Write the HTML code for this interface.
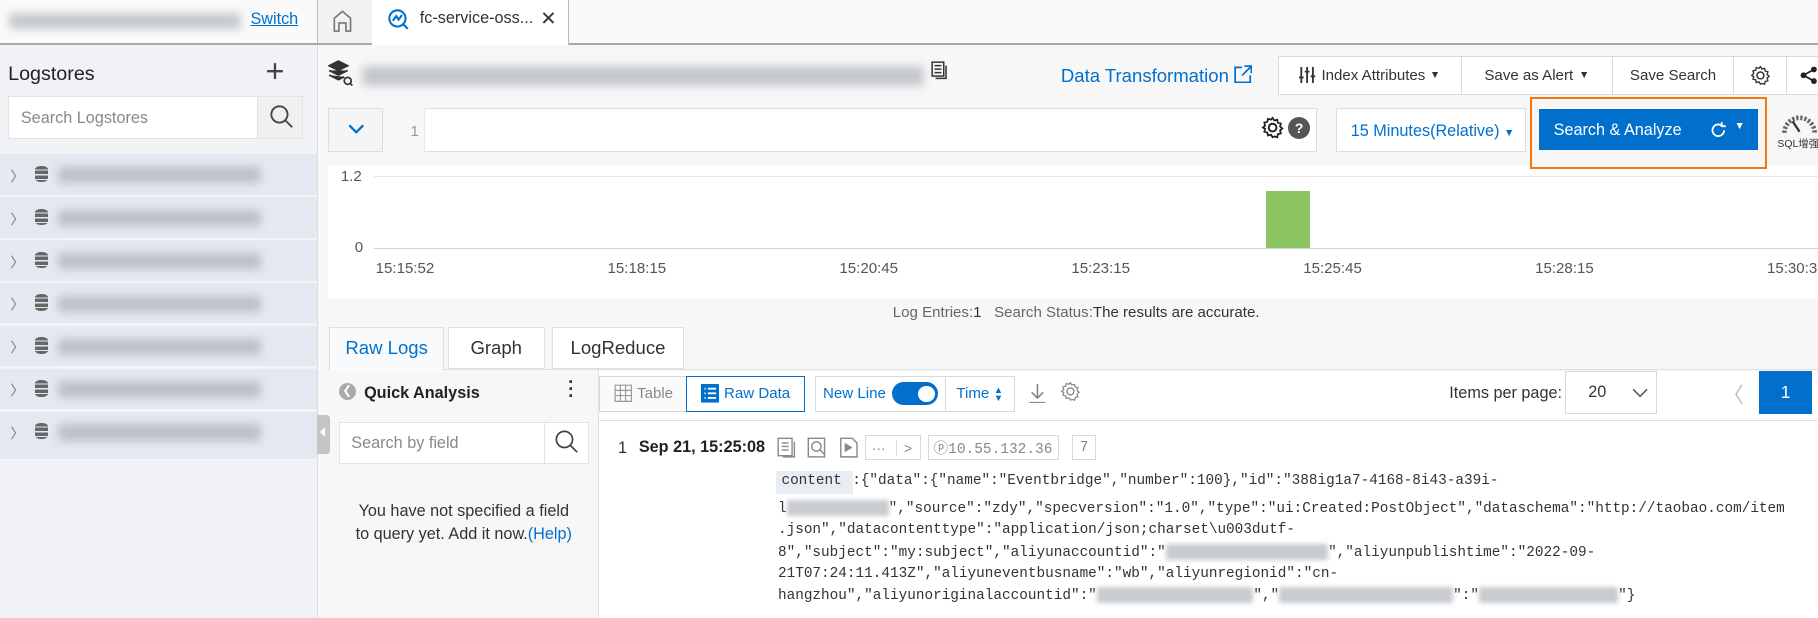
<!DOCTYPE html>
<html><head><meta charset="utf-8"><style>
html,body{margin:0;padding:0;overflow:hidden;background:#f7f7f7}
#r{position:relative;width:1568px;height:533px;zoom:1.15944;font-family:"Liberation Sans",sans-serif;font-size:13px;color:#333;background:#f7f7f8;overflow:hidden}
.a{position:absolute}
.blur{position:absolute;background:#9aa0a8;filter:blur(4px);opacity:.55;border-radius:3px}
.mono{font-family:"Liberation Mono",monospace;font-size:12.4px;color:#333;white-space:pre}
.btn{position:absolute;border:1px solid #d8d8d8;background:#fff;box-sizing:border-box;display:flex;align-items:center;justify-content:center;font-size:13px;color:#333}
.row{position:absolute;left:0;width:273px;height:35px;background:#e4e8f1;border-bottom:2px solid #f3f4f7}
.row .chev{position:absolute;left:9px;top:10px;font-size:12px;color:#777}
.db{position:absolute;left:30px;top:10px;width:11px;height:14px;background:repeating-linear-gradient(#666 0 3px,#e4e8f1 3px 4px);border-radius:5px/3px}
.xl{position:absolute;top:224px;font-size:13px;color:#555}
.blk{display:inline-block;background:#c8cbd0;filter:blur(2px);height:14px;vertical-align:middle}
</style></head><body><div id="r">
<div class="a" style="left:0;top:0;width:1568px;height:37px;background:#fafafa;border-bottom:2px solid #a8a8a8"></div>
<div class="blur" style="left:8px;top:11px;width:200px;height:14px"></div>
<div class="a" style="left:216px;top:9px;color:#0070cc;text-decoration:underline;font-size:14px">Switch</div>
<div class="a" style="left:273px;top:0;width:47px;height:37px;background:#f2f2f2;border-left:1px solid #bbb;border-right:1px solid #bbb"></div>
<svg class="a" style="left:286px;top:8px" width="18" height="20" viewBox="0 0 18 20"><path d="M2 19V8L9 2l7 6v11H12v-7H6v7z" fill="none" stroke="#777" stroke-width="1.4"/></svg>
<div class="a" style="left:321px;top:0;width:169px;height:39px;background:#fff;border-right:1px solid #bbb"></div>
<svg class="a" style="left:334px;top:7px" width="20" height="20" viewBox="0 0 20 20"><circle cx="9" cy="9" r="7" fill="none" stroke="#0070cc" stroke-width="1.8"/><path d="M5 11l3-4 2 3 3-4M14 14l4 4" fill="none" stroke="#0070cc" stroke-width="1.8"/></svg>
<div class="a" style="left:362px;top:8px;font-size:14px;color:#333">fc-service-oss...</div>
<div class="a" style="left:466px;top:6px;font-size:17px;color:#333">✕</div>
<div class="a" style="left:0;top:39px;width:273px;height:494px;background:#f1f2f6;border-right:1px solid #ddd"></div>
<div class="a" style="left:7px;top:54px;font-size:17px;color:#222">Logstores</div>
<div class="a" style="left:229px;top:46px;font-size:28px;font-weight:300;color:#444">+</div>
<div class="a" style="left:7px;top:83px;width:254px;height:37px;background:#fff;border:1px solid #e2e2e2;box-sizing:border-box"></div>
<div class="a" style="left:18px;top:94px;color:#888;font-size:14px">Search Logstores</div>
<div class="a" style="left:222px;top:83px;width:39px;height:37px;background:#f0f0f0;border:1px solid #e2e2e2;box-sizing:border-box"></div>
<svg class="a" style="left:232px;top:90px" width="22" height="22" viewBox="0 0 22 22"><circle cx="9" cy="9" r="7" fill="none" stroke="#444" stroke-width="1.6"/><path d="M14 14l6 6" stroke="#444" stroke-width="1.6"/></svg>
<div class="row" style="top:133px"><span class="chev">〉</span><span class="db"></span><div class="blur" style="left:50px;top:11px;width:175px;height:14px"></div></div>
<div class="row" style="top:170px"><span class="chev">〉</span><span class="db"></span><div class="blur" style="left:50px;top:11px;width:175px;height:14px"></div></div>
<div class="row" style="top:207px"><span class="chev">〉</span><span class="db"></span><div class="blur" style="left:50px;top:11px;width:175px;height:14px"></div></div>
<div class="row" style="top:244px"><span class="chev">〉</span><span class="db"></span><div class="blur" style="left:50px;top:11px;width:175px;height:14px"></div></div>
<div class="row" style="top:281px"><span class="chev">〉</span><span class="db"></span><div class="blur" style="left:50px;top:11px;width:175px;height:14px"></div></div>
<div class="row" style="top:318px"><span class="chev">〉</span><span class="db"></span><div class="blur" style="left:50px;top:11px;width:175px;height:14px"></div></div>
<div class="row" style="top:355px;height:41px"><span class="chev">〉</span><span class="db"></span><div class="blur" style="left:50px;top:11px;width:175px;height:14px"></div></div>
<div class="a" style="left:273px;top:358px;width:12px;height:34px;background:#c4c4c4;border-radius:0 3px 3px 0"></div>
<div class="a" style="left:276px;top:368px;width:0;height:0;border:5px solid transparent;border-right-color:#fff;border-left:0"></div>
<svg class="a" style="left:283px;top:52px" width="22" height="24" viewBox="0 0 22 24"><path d="M9 1l8 4-8 4-8-4zM1 9l8 4 8-4M1 13l8 4 5-2.5" fill="#333" stroke="#333" stroke-width="1.5"/><circle cx="17" cy="18" r="3" fill="none" stroke="#333" stroke-width="1.5"/><path d="M19 20l2 2" stroke="#333" stroke-width="1.5"/></svg>
<div class="blur" style="left:312px;top:57px;width:485px;height:17px"></div>
<svg class="a" style="left:803px;top:53px" width="14" height="16" viewBox="0 0 14 16"><rect x="1" y="1" width="10" height="12" fill="none" stroke="#333" stroke-width="1.3"/><path d="M3 4h6M3 7h6M3 10h6M13 4v11H4" fill="none" stroke="#333" stroke-width="1.3"/></svg>
<div class="a" style="left:915px;top:56px;font-size:16px;color:#0070cc">Data Transformation</div>
<svg class="a" style="left:1064px;top:56px" width="16" height="16" viewBox="0 0 16 16"><path d="M7 2H1v13h13V9M9 1h6v6M15 1L7 9" fill="none" stroke="#0070cc" stroke-width="1.5"/></svg>
<div class="btn" style="left:1102px;top:48px;width:159px;height:34px">
<svg width="14" height="14" viewBox="0 0 14 14" style="margin-right:5px"><path d="M2 0v14M7 0v14M12 0v14M0 9h4M5 4h4M10 8h4" stroke="#333" stroke-width="1.6"/></svg>Index Attributes <span style="font-size:9px;margin-left:4px">▼</span></div>
<div class="btn" style="left:1260px;top:48px;width:131px;height:34px">Save as Alert <span style="font-size:9px;margin-left:5px">▼</span></div>
<div class="btn" style="left:1390px;top:48px;width:106px;height:34px">Save Search</div>
<div class="btn" style="left:1495px;top:48px;width:46px;height:34px"><svg width="18" height="18" viewBox="0 0 18 18"><circle cx="9" cy="9" r="3" fill="none" stroke="#333" stroke-width="1.3"/><path d="M9 1.5l1.3 2 2.3-.6.5 2.3 2.3.6-.6 2.3 1.7 1.6-1.7 1.6.6 2.3-2.3.6-.5 2.3-2.3-.6L9 16.5l-1.3-2-2.3.6-.5-2.3-2.3-.6.6-2.3L1.5 9l1.7-1.6-.6-2.3 2.3-.6.5-2.3 2.3.6z" fill="none" stroke="#333" stroke-width="1.2"/></svg></div>
<div class="btn" style="left:1540px;top:48px;width:40px;height:34px;justify-content:flex-start;padding-left:12px">
<svg width="16" height="16" viewBox="0 0 16 16"><circle cx="12" cy="3" r="2.5" fill="#222"/><circle cx="3" cy="8" r="2.5" fill="#222"/><circle cx="12" cy="13" r="2.5" fill="#222"/><path d="M12 3L3 8l9 5" stroke="#222" stroke-width="1.5" fill="none"/></svg></div>
<div class="a" style="left:283px;top:93px;width:853px;height:38px;background:#fff;border:1px solid #ddd;box-sizing:border-box"></div>
<div class="a" style="left:283px;top:93px;width:47px;height:38px;background:#f5f5f5;border:1px solid #ddd;box-sizing:border-box"></div>
<svg class="a" style="left:299px;top:106px" width="16" height="10" viewBox="0 0 16 10"><path d="M2 2l6 6 6-6" fill="none" stroke="#0070cc" stroke-width="2"/></svg>
<div class="a" style="left:330px;top:93px;width:36px;height:38px;background:#f7f7f7;border-right:1px solid #e8e8e8"></div>
<div class="a" style="left:354px;top:106px;color:#999;font-size:13px">1</div>
<svg class="a" style="left:1088px;top:100px" width="20" height="20" viewBox="0 0 18 18"><circle cx="9" cy="9" r="3" fill="none" stroke="#222" stroke-width="1.5"/><path d="M9 1.5l1.3 2 2.3-.6.5 2.3 2.3.6-.6 2.3 1.7 1.6-1.7 1.6.6 2.3-2.3.6-.5 2.3-2.3-.6L9 16.5l-1.3-2-2.3.6-.5-2.3-2.3-.6.6-2.3L1.5 9l1.7-1.6-.6-2.3 2.3-.6.5-2.3 2.3.6z" fill="none" stroke="#222" stroke-width="1.4"/></svg>
<div class="a" style="left:1111px;top:101px;width:19px;height:19px;border-radius:50%;background:#555;color:#fff;font-size:12px;font-weight:bold;text-align:center;line-height:19px">?</div>
<div class="a" style="left:1152px;top:93px;width:164px;height:38px;background:#fff;border:1px solid #ddd;box-sizing:border-box"></div>
<div class="a" style="left:1165px;top:105px;color:#0070cc;font-size:14px">15 Minutes(Relative) <span style="font-size:9px">▼</span></div>
<div class="a" style="left:283px;top:142px;width:1285px;height:116px;background:#fff"></div>
<div class="a" style="left:1320px;top:84px;width:204px;height:62px;border:2px solid #f5770f;box-sizing:border-box;background:#f7f7f8"></div>
<div class="a" style="left:1327px;top:94px;width:189px;height:35px;background:#0070cc"></div>
<div class="a" style="left:1340px;top:104px;color:#fff;font-size:14px">Search &amp; Analyze</div>
<svg class="a" style="left:1474px;top:104px" width="16" height="16" viewBox="0 0 16 16"><path d="M13 8a5 5 0 1 1-2-4M11 1v3.5h3.5" fill="none" stroke="#fff" stroke-width="1.6"/></svg>
<div class="a" style="left:1496px;top:104px;color:#fff;font-size:9px">▼</div>
<svg class="a" style="left:1536px;top:97px" width="32" height="20" viewBox="0 0 32 20"><path d="M3 18A13 13 0 0 1 29 18" fill="none" stroke="#666" stroke-width="4" stroke-dasharray="2 1.5"/><path d="M10 8l6 9" stroke="#333" stroke-width="2"/></svg>
<div class="a" style="left:1533px;top:117px;font-size:9px;color:#333;white-space:nowrap">SQL增强</div>
<div class="a" style="left:323px;top:152px;width:1245px;height:1px;background:#e6e6e6"></div>
<div class="a" style="left:323px;top:214px;width:1245px;height:1px;background:#ccd3e3"></div>
<div class="a" style="left:294px;top:145px;font-size:13px;color:#555">1.2</div>
<div class="a" style="left:306px;top:206px;font-size:13px;color:#555">0</div>
<div class="a" style="left:1092px;top:165px;width:38px;height:49px;background:#8cc660"></div>
<div class="xl" style="left:324px">15:15:52</div>
<div class="xl" style="left:524px">15:18:15</div>
<div class="xl" style="left:724px">15:20:45</div>
<div class="xl" style="left:924px">15:23:15</div>
<div class="xl" style="left:1124px">15:25:45</div>
<div class="xl" style="left:1324px">15:28:15</div>
<div class="xl" style="left:1524px">15:30:30</div>
<div class="a" style="left:770px;top:262px;font-size:13px;color:#666">Log Entries:<span style="color:#333">1</span> &nbsp; Search Status:<span style="color:#333">The results are accurate.</span></div>
<div class="a" style="left:283px;top:318px;width:1285px;height:1px;background:#e0e0e0"></div>
<div class="a" style="left:284px;top:282px;width:99px;height:37px;background:#f9fafc;border:1px solid #e0e0e0;border-bottom:none;box-sizing:border-box;color:#0070cc;font-size:16px;text-align:center;line-height:34px">Raw Logs</div>
<div class="a" style="left:386px;top:282px;width:84px;height:36px;background:#fff;border:1px solid #e0e0e0;box-sizing:border-box;font-size:16px;text-align:center;line-height:34px">Graph</div>
<div class="a" style="left:476px;top:282px;width:114px;height:36px;background:#fff;border:1px solid #e0e0e0;box-sizing:border-box;font-size:16px;text-align:center;line-height:34px">LogReduce</div>
<div class="a" style="left:292px;top:330px;width:15px;height:15px;border-radius:50%;background:#aaa;color:#fff;font-size:10px;text-align:center;line-height:15px">❮</div>
<div class="a" style="left:314px;top:331px;font-size:14px;font-weight:bold;color:#222">Quick Analysis</div>
<div class="a" style="left:490px;top:327px;font-size:16px;font-weight:bold;color:#333;line-height:6px">·<br>·<br>·</div>
<div class="a" style="left:292px;top:364px;width:216px;height:36px;background:#fff;border:1px solid #e2e2e2;box-sizing:border-box"></div>
<div class="a" style="left:303px;top:374px;color:#888;font-size:14px">Search by field</div>
<div class="a" style="left:469px;top:364px;width:39px;height:36px;border-left:1px solid #e2e2e2;box-sizing:border-box"></div>
<svg class="a" style="left:478px;top:370px" width="22" height="22" viewBox="0 0 22 22"><circle cx="9" cy="9" r="7" fill="none" stroke="#444" stroke-width="1.5"/><path d="M14 14l6 6" stroke="#444" stroke-width="1.5"/></svg>
<div class="a" style="left:292px;top:431px;width:216px;text-align:center;font-size:14px;line-height:20px;color:#333">You have not specified a field<br>to query yet. Add it now.<span style="color:#0070cc">(Help)</span></div>
<div class="a" style="left:516px;top:320px;width:1052px;height:213px;background:#fff;border-left:1px solid #e0e0e0"></div>
<div class="a" style="left:516px;top:362px;width:1052px;height:1px;background:#e0e0e0"></div>
<div class="btn" style="left:517px;top:324px;width:76px;height:31px;color:#888;background:#fafafa"><svg width="16" height="16" viewBox="0 0 16 16" style="margin-right:4px"><path d="M1 1h14v14H1zM1 5.5h14M1 10h14M5.5 1v14M10 1v14" fill="none" stroke="#999" stroke-width="1"/></svg>Table</div>
<div class="btn" style="left:592px;top:324px;width:102px;height:31px;color:#0070cc;border-color:#0070cc"><svg width="16" height="16" viewBox="0 0 16 16" style="margin-right:4px"><rect width="16" height="16" fill="#0070cc"/><path d="M3 4h1M6 4h7M3 8h1M6 8h7M3 12h1M6 12h7" stroke="#fff" stroke-width="1.6"/></svg>Raw Data</div>
<div class="btn" style="left:703px;top:324px;width:113px;height:31px;color:#0070cc;justify-content:flex-start;padding-left:6px">New Line<span style="display:inline-block;margin-left:5px;width:40px;height:20px;border-radius:10px;background:#0070cc;position:relative"><span style="position:absolute;right:3px;top:3px;width:14px;height:14px;border-radius:50%;background:#fff"></span></span></div>
<div class="btn" style="left:815px;top:324px;width:60px;height:31px;color:#0070cc">Time <span style="font-size:8px;line-height:7px;margin-left:4px;color:#0070cc">▲<br>▼</span></div>
<svg class="a" style="left:886px;top:330px" width="18" height="18" viewBox="0 0 18 18"><path d="M9 1v12M4 8l5 5 5-5M2 17h14" fill="none" stroke="#888" stroke-width="1.4"/></svg>
<svg class="a" style="left:914px;top:329px" width="18" height="18" viewBox="0 0 18 18"><circle cx="9" cy="9" r="3" fill="none" stroke="#888" stroke-width="1.2"/><path d="M9 1.5l1.3 2 2.3-.6.5 2.3 2.3.6-.6 2.3 1.7 1.6-1.7 1.6.6 2.3-2.3.6-.5 2.3-2.3-.6L9 16.5l-1.3-2-2.3.6-.5-2.3-2.3-.6.6-2.3L1.5 9l1.7-1.6-.6-2.3 2.3-.6.5-2.3 2.3.6z" fill="none" stroke="#888" stroke-width="1.1"/></svg>
<div class="a" style="left:1250px;top:331px;font-size:14px;color:#333">Items per page:</div>
<div class="btn" style="left:1350px;top:320px;width:79px;height:37px;justify-content:flex-start;padding-left:19px;font-size:14px">20<svg width="14" height="10" viewBox="0 0 14 10" style="margin-left:22px"><path d="M1 2l6 6 6-6" fill="none" stroke="#555" stroke-width="1.3"/></svg></div>
<div class="a" style="left:1486px;top:327px;font-size:18px;color:#bbb">〈</div>
<div class="a" style="left:1517px;top:320px;width:46px;height:37px;background:#0070cc;color:#fff;font-size:15px;text-align:center;line-height:37px">1</div>
<div class="a" style="left:533px;top:379px;font-size:14px;color:#333">1</div>
<div class="a" style="left:551px;top:378px;font-size:14px;font-weight:bold;color:#222">Sep 21, 15:25:08</div>
<svg class="a" style="left:670px;top:376px" width="80" height="20" viewBox="0 0 80 20"><g fill="none" stroke="#888" stroke-width="1.2"><rect x="1" y="2" width="12" height="15"/><path d="M4 6h6M4 9h6M4 12h6M15 5v13H5"/><rect x="27" y="2" width="14" height="16"/><circle cx="34" cy="9" r="4"/><path d="M37 12l4 4"/><path d="M55 2h10l4 4v12H55z"/><path d="M59 7l5 3-5 3z" fill="#888"/></g></svg>
<div class="btn" style="left:746px;top:375px;width:48px;height:22px;justify-content:flex-start;padding-left:5px;color:#888;font-size:12px">···<span style="margin-left:9px;border-left:1px solid #ddd;padding-left:6px">&gt;</span></div>
<div class="btn" style="left:800px;top:375px;width:113px;height:22px;color:#888;font-family:'Liberation Mono',monospace;font-size:12.5px">ⓟ10.55.132.36</div>
<div class="btn" style="left:925px;top:375px;width:20px;height:22px;color:#888;font-family:'Liberation Mono',monospace;font-size:12.5px">7</div>
<div class="a" style="left:669px;top:406px;width:67px;height:20px;background:#e8edf4"></div>
<div class="mono a" style="left:674px;top:408px">content</div>
<div class="mono a" style="left:735px;top:408px">:{"data":{"name":"Eventbridge","number":100},"id":"388ig1a7-4168-8i43-a39i-</div>
<div class="mono a" style="left:671px;top:431px">l<span class="blk" style="width:88px"></span>","source":"zdy","specversion":"1.0","type":"ui:Created:PostObject","dataschema":"http://taobao.com/item</div>
<div class="mono a" style="left:671px;top:450px">.json","datacontenttype":"application/json;charset\u003dutf-</div>
<div class="mono a" style="left:671px;top:469px">8","subject":"my:subject","aliyunaccountid":"<span class="blk" style="width:140px"></span>","aliyunpublishtime":"2022-09-</div>
<div class="mono a" style="left:671px;top:488px">21T07:24:11.413Z","aliyuneventbusname":"wb","aliyunregionid":"cn-</div>
<div class="mono a" style="left:671px;top:506px">hangzhou","aliyunoriginalaccountid":"<span class="blk" style="width:135px"></span>","<span class="blk" style="width:150px"></span>":"<span class="blk" style="width:120px"></span>"}</div>
</div></body></html>
